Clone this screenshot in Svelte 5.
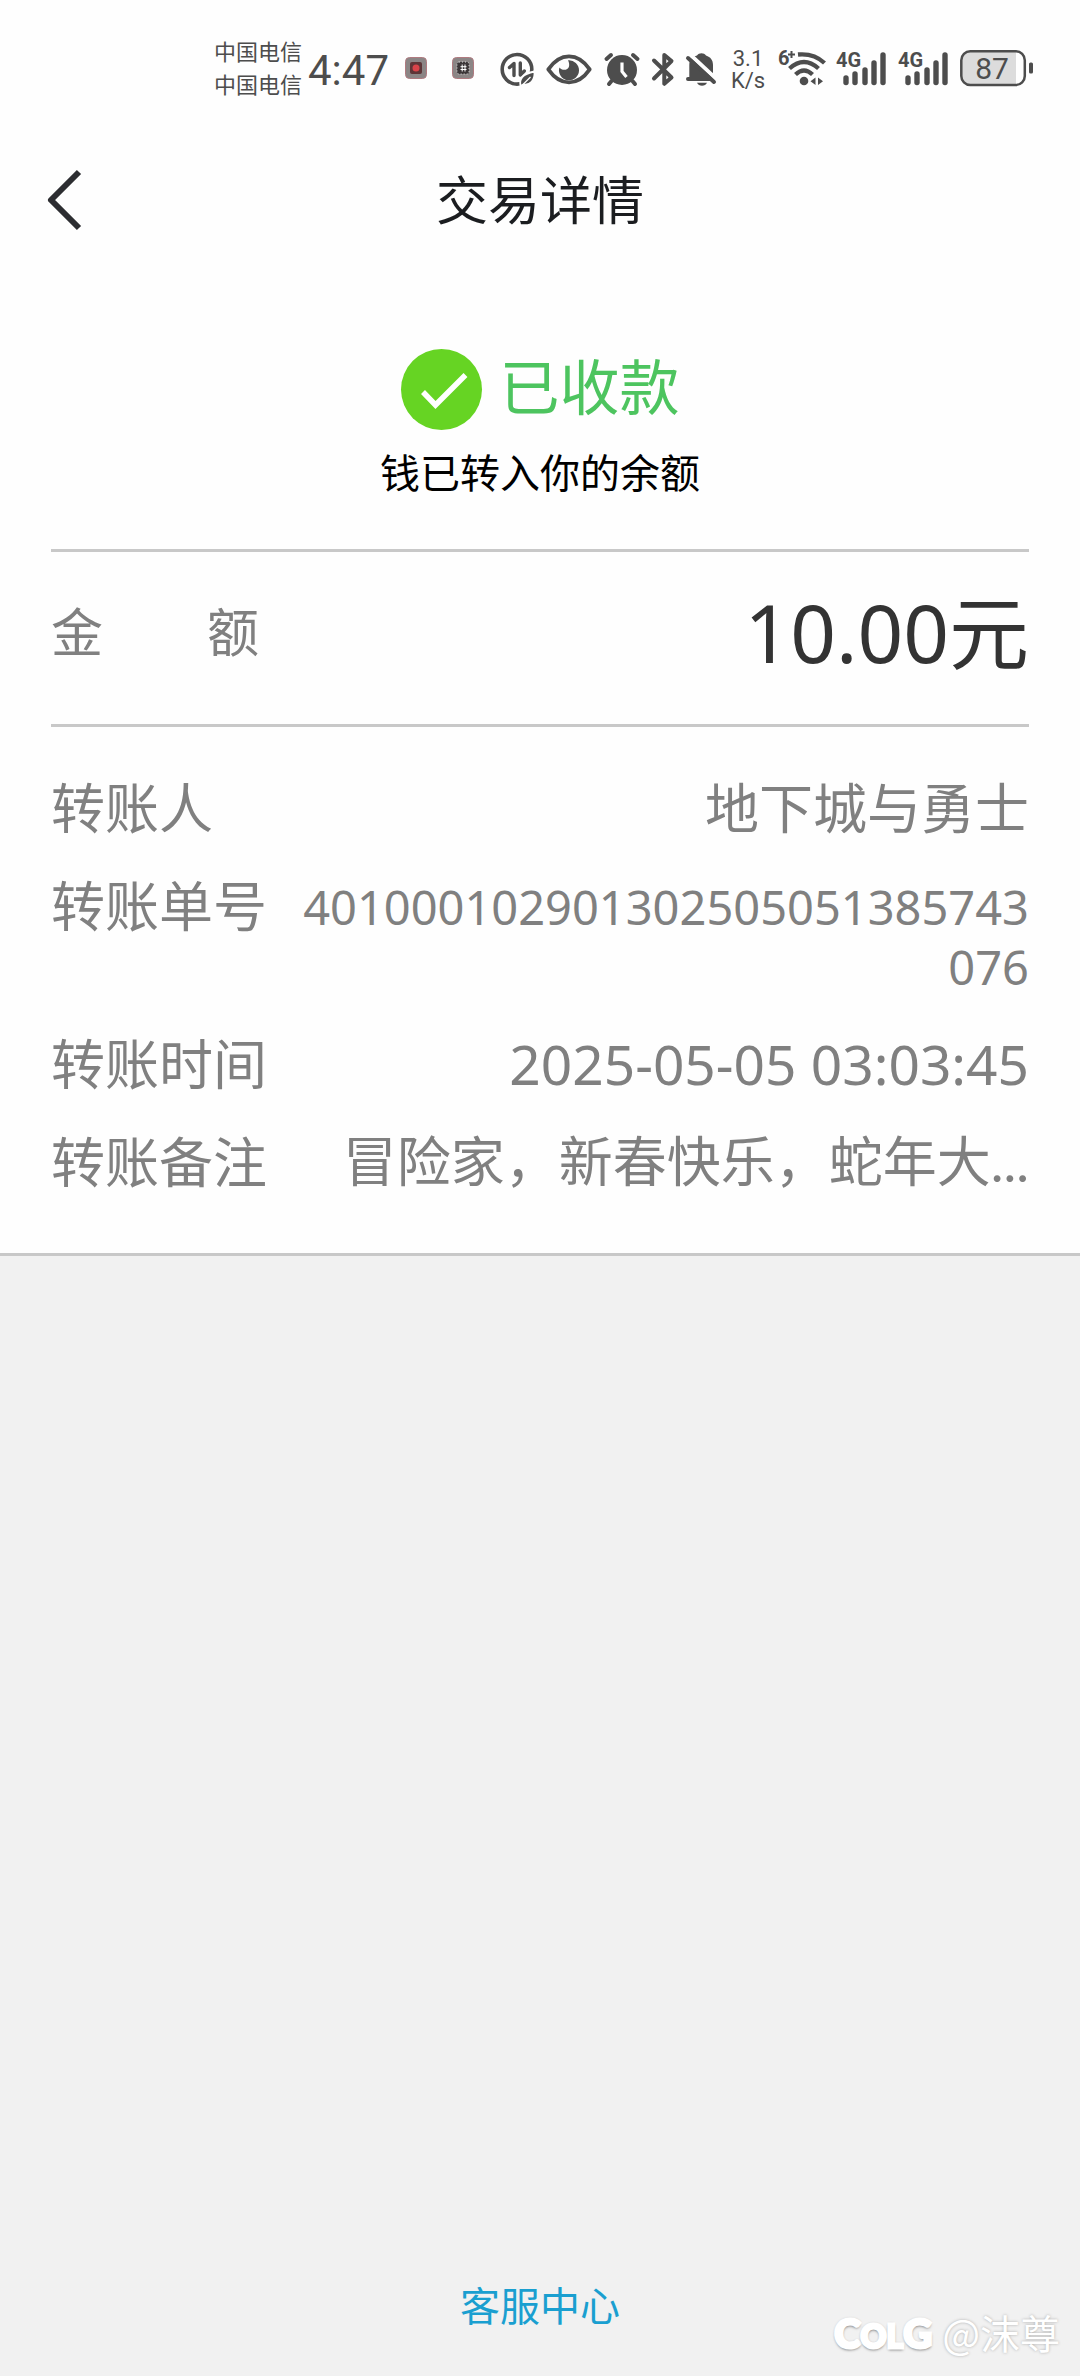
<svelte:head>
  <title>交易详情</title>
</svelte:head>

<script lang="ts">
  const details: { label: string; value: string; kind: string }[] = [
    { label: '转账人', value: '地下城与勇士', kind: 'name' },
    { label: '转账单号', value: '401000102901302505051385743076', kind: 'number' },
    { label: '转账时间', value: '2025-05-05 03:03:45', kind: 'time' },
    { label: '转账备注', value: '冒险家，新春快乐，蛇年大...', kind: 'remark' }
  ];

  const sims = [1, 2];
  const bars = [
    { x: 10, top: 28 },
    { x: 19, top: 24 },
    { x: 29, top: 20 },
    { x: 38, top: 13 },
    { x: 47, top: 5 }
  ];

  function goBack() {
    history.back();
  }
</script>

<div class="page">
  <div class="status-bar">
    <div class="carriers">
      <span>中国电信</span>
      <span>中国电信</span>
    </div>
    <span class="clock">4:47</span>

    <div class="notifications">
      <svg width="22" height="24" viewBox="0 0 22 24">
        <rect x="0.5" y="1.5" width="21" height="21" rx="4" fill="#8b8585" stroke="#b07a80" />
        <rect x="5" y="6" width="12" height="12" rx="2" fill="#5e3537" />
        <circle cx="11" cy="12" r="3.5" fill="#d8444a" />
      </svg>
      <svg width="22" height="24" viewBox="0 0 22 24">
        <rect x="0.5" y="1.5" width="21" height="21" rx="4" fill="#8b8585" stroke="#b07a80" />
        <rect x="5" y="6" width="12" height="12" rx="2" fill="#3c3638" stroke="#ddd" stroke-dasharray="1 2" />
        <path d="M10.200 8.500v7M13 8.500v7M8.500 10.700h6M8.500 13.500h6" stroke="#fff" />
      </svg>
    </div>

    <div class="system">
      <!-- data saver -->
      <svg width="34" height="36" viewBox="0 0 34 36" fill="none" stroke="#4d4d4d">
        <circle cx="17" cy="19.300" r="14.800" stroke-width="3.600" />
        <path d="M9.500 17.500L14 13.500v12M20.300 13v12l4-4" stroke-width="3.400" stroke-linejoin="round" stroke-linecap="round" />
        <path d="M20.500 36C19 29 22 24 34.500 21.500C35 31 30 35.500 23.500 34.500Z" fill="#4d4d4d" stroke="#fefefe" stroke-width="1.800" />
        <path d="M22 35.500L30.500 27" stroke="#fefefe" stroke-width="1.300" />
      </svg>
      <!-- eye comfort -->
      <svg width="46" height="36" viewBox="0 0 46 36">
        <path d="M2.300 19.300C8 11 15 6.300 23 6.300S38 11 43.700 19.300C38 27.500 31 32.300 23 32.300S8 27.500 2.300 19.300Z" fill="none" stroke="#4d4d4d" stroke-width="3.800" stroke-linejoin="round" />
        <path d="M22 10.300A10 10 0 1 1 13.400 17.500C16 21 22 20.500 23 16.500C23.500 14.500 23 12 22 10.300Z" fill="#4d4d4d" />
      </svg>
      <!-- alarm -->
      <svg width="36" height="36" viewBox="0 0 36 36" fill="none" stroke="#4d4d4d" stroke-width="4" stroke-linecap="round">
        <circle cx="18" cy="20" r="15" fill="#4d4d4d" stroke="none" />
        <path d="M2.500 9L7 5M29 5L33.500 9M7.500 31L5 34M28.500 31L31 34" />
        <path d="M18 12.500V21.500L22.500 27" stroke="#fefefe" stroke-width="3.200" stroke-linecap="butt" />
      </svg>
      <!-- bluetooth -->
      <svg width="22" height="36" viewBox="0 0 22 36" fill="none" stroke="#4d4d4d" stroke-width="4" stroke-linejoin="round" stroke-linecap="round">
        <path d="M2 10.500L19.500 27.500L12.300 33.800V5L19.500 11L2 28.500" />
      </svg>
      <!-- muted bell -->
      <svg width="32" height="36" viewBox="0 0 32 36">
        <path d="M3.300 27V15C3.300 9 7 6.500 11 5.500C13 2.500 18 2.500 20 5.500C24.500 7 27 10 27 15V27L29 31H2A2 2 0 0 1 2 27Z" fill="#4d4d4d" />
        <path d="M11 32.700h10c-1.500 4-8.500 4-10 0Z" fill="#4d4d4d" />
        <path d="M4.500 5L34 32.500" stroke="#fefefe" stroke-width="4" />
        <path d="M2 8L28 32" stroke="#4d4d4d" stroke-width="4" stroke-linecap="round" />
      </svg>
      <div class="speed">
        <span>3.1</span>
        <span>K/s</span>
      </div>
      <!-- wifi -->
      <svg width="46" height="36" viewBox="0 0 46 36">
        <circle cx="26" cy="31" r="4.300" fill="#4d4d4d" />
        <g fill="none" stroke="#4d4d4d" stroke-width="4.300">
          <path d="M17.500 24.500Q26 16.500 34.500 24.500" />
          <path d="M11.500 18.500Q26 5.500 40.500 18.500" />
          <path d="M20 4.500Q36 3 46.500 13" />
        </g>
        <path d="M37.500 27.500v7.500l-5-3.800zM40 27.500v7.500l5-3.800z" fill="#4d4d4d" />
        <text x="0" y="15" class="tag">6</text>
        <path d="M13.500 1v7M10 4.500h7" stroke="#4d4d4d" stroke-width="2" />
      </svg>
      {#each sims as sim (sim)}
        <svg width="50" height="36" viewBox="0 0 50 36">
          {#each bars as bar (bar.x)}
            <path d="M{bar.x} {bar.top}V32.500" stroke="#4d4d4d" stroke-width="5.400" stroke-linecap="round" />
          {/each}
          <text x="0" y="17" class="tag outlined">4G</text>
        </svg>
      {/each}
      <!-- battery -->
      <svg width="74" height="36" viewBox="0 0 74 36">
        <path d="M10 2H56V34H10Q2 34 2 26V10Q2 2 10 2Z" fill="#dcdcdc" />
        <rect x="1.300" y="1.300" width="63.500" height="33.800" rx="9" fill="none" stroke="#4d4d4d" stroke-width="2.500" />
        <rect x="69" y="12.500" width="4" height="11" rx="1.500" fill="#4d4d4d" />
        <text x="32" y="29" class="charge">87</text>
      </svg>
    </div>
  </div>

  <header>
    <button class="back" aria-label="返回" on:click={goBack}>
      <svg width="36" height="64" viewBox="0 0 36 64">
        <path d="M33 4L5 32L33 60" fill="none" stroke="#2c2d31" stroke-width="6" stroke-linejoin="round" />
      </svg>
    </button>
    <h1>交易详情</h1>
  </header>

  <main>
    <section class="result">
      <div class="result-title">
        <svg width="81" height="81" viewBox="0 0 81 81">
          <circle cx="40.500" cy="40.500" r="40.500" fill="#66d423" />
          <path d="M22 43L34.500 56L64.500 26" fill="none" stroke="#fff" stroke-width="5.500" />
        </svg>
        <h2>已收款</h2>
      </div>
      <p>钱已转入你的余额</p>
    </section>

    <section class="amount">
      <span class="amount-label"><span>金</span><span>额</span></span>
      <strong>10.00元</strong>
    </section>

    <dl>
      {#each details as { label, value, kind } (label)}
        <div class="row">
          <dt>{label}</dt>
          <dd class={kind}>{value}</dd>
        </div>
      {/each}
    </dl>
  </main>

  <footer>
    <a href="#service">客服中心</a>
  </footer>

  <div class="watermark">
    <span class="logo">C<small>OL</small>G</span>
    <span class="author">@沫尊</span>
  </div>
</div>

<style>
  :global(body) {
    margin: 0;
    background: #f1f1f1;
  }

  .page {
    position: relative;
    display: flex;
    flex-direction: column;
    min-height: 100vh;
    font-family: "Noto Sans", "Noto Sans CJK SC", sans-serif;
    color: #808080;
  }

  svg {
    display: block;
    flex: none;
    overflow: visible;
  }

  .status-bar {
    display: flex;
    align-items: center;
    justify-content: flex-end;
    height: 72px;
    padding: 32px 46px 16px;
    background: #fefefe;
    color: #4d4d4d;
  }

  .carriers {
    display: flex;
    flex-direction: column;
    margin-right: 6px;
    font-size: 22px;
    line-height: 33px;
    white-space: nowrap;
  }

  .clock {
    margin-right: 16px;
    padding-top: 6px;
    font-family: Roboto, sans-serif;
    font-size: 42px;
    line-height: 48px;
  }

  .notifications {
    display: flex;
    gap: 25px;
    margin-right: 26px;
  }

  .system {
    display: flex;
    align-items: center;
    gap: 12px;
  }

  .speed {
    display: flex;
    flex-direction: column;
    align-items: center;
    width: 36px;
    padding-top: 4px;
    font-family: Roboto, sans-serif;
    font-size: 22px;
    line-height: 22px;
  }

  .tag {
    fill: #4d4d4d;
    font-family: Roboto, sans-serif;
    font-size: 20px;
    font-weight: 700;
  }

  .outlined {
    paint-order: stroke;
    stroke: #fefefe;
    stroke-width: 3px;
  }

  .charge {
    fill: #4d4d4d;
    font-family: Roboto, sans-serif;
    font-size: 30px;
    text-anchor: middle;
  }

  header {
    display: grid;
    grid-template-columns: 1fr auto 1fr;
    align-items: center;
    height: 160px;
    padding: 0 46px;
    background: #fefefe;
  }

  .back {
    justify-self: start;
    padding: 0;
    border: none;
    background: none;
    cursor: pointer;
  }

  h1 {
    margin: 0;
    color: #1b1d20;
    font-size: 52px;
    font-weight: 400;
    line-height: 80px;
  }

  main {
    padding: 0 51px;
    border-bottom: 3px solid #c8c8c8;
    background: #fefefe;
  }

  .result {
    padding: 69px 0 46px;
    border-bottom: 3px solid #c8c8c8;
    text-align: center;
  }

  .result-title {
    display: flex;
    justify-content: center;
    gap: 18px;
  }

  h2 {
    margin: 0;
    color: #4dc45f;
    font-size: 60px;
    font-weight: 400;
    line-height: 76px;
  }

  p {
    margin: 13px 0 0;
    color: #000;
    font-size: 40px;
    line-height: 60px;
  }

  .amount {
    display: flex;
    align-items: center;
    justify-content: space-between;
    padding: 20px 0 32px;
    border-bottom: 3px solid #c8c8c8;
    line-height: 120px;
  }

  .amount-label {
    display: flex;
    gap: 104px;
    font-size: 52px;
  }

  strong {
    color: #333;
    font-size: 80px;
    font-weight: 400;
  }

  dl {
    display: flex;
    flex-direction: column;
    gap: 18px;
    margin: 0;
    padding: 41px 0 51px;
    font-size: 54px;
    line-height: 80px;
  }

  .row {
    display: flex;
    justify-content: space-between;
    gap: 32px;
  }

  dt {
    flex: none;
  }

  dd {
    min-width: 0;
    margin: 0;
    text-align: right;
  }

  .number {
    padding: 11px 0 9px;
    font-size: 47px;
    line-height: 60px;
    word-break: break-all;
  }

  .time {
    font-size: 55px;
  }

  .remark {
    overflow: hidden;
    font-family: Lato, "Noto Sans CJK SC", sans-serif;
    text-overflow: ellipsis;
    white-space: nowrap;
  }

  footer {
    display: flex;
    justify-content: center;
    margin-top: auto;
    padding: 40px 0;
  }

  a {
    color: #1a9fd0;
    font-size: 40px;
    line-height: 60px;
    text-decoration: none;
  }

  .watermark {
    position: absolute;
    right: 20px;
    bottom: 10px;
    display: flex;
    align-items: center;
    gap: 10px;
    color: #fff;
    line-height: 60px;
  }

  .logo {
    padding-top: 6px;
    font-family: Lato, sans-serif;
    font-size: 40px;
    font-weight: 900;
    -webkit-text-stroke: 3px #fff;
    text-shadow: 0 0 3px #888, 0 2px 3px #777;
  }

  .logo small {
    font-size: 32px;
  }

  .author {
    font-family: "Noto Sans CJK SC", sans-serif;
    font-size: 40px;
    text-shadow: 0 0 3px #aaa;
  }
</style>
